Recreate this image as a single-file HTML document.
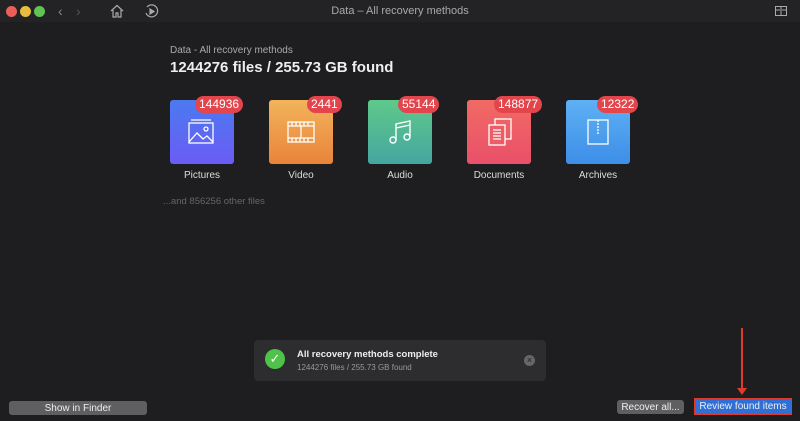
<!DOCTYPE html><html><head><style>
body{margin:0;width:800px;height:421px;background:#1e1e20;font-family:"Liberation Sans",sans-serif;position:relative;overflow:hidden;color:#ddd}
.tb{position:absolute;left:0;top:0;width:800px;height:22px;background:#232225}
.d{position:absolute;top:6px;width:11px;height:11px;border-radius:50%}
.t{position:absolute;width:64px;height:64px;top:100px;border-radius:3px}
.b{position:absolute;top:96px;height:17px;padding:0 4px;background:#e2464c;border-radius:9px;color:#fff;font-size:12px;line-height:17px}
.l{position:absolute;top:170px;width:100px;text-align:center;font-size:10px;color:#ddd}
.btn{position:absolute;height:14px;background:#5f5f62;border-radius:3px;font-size:10px;line-height:15px;text-align:center;color:#eee}
</style></head><body>
<div class="tb"></div>
<div class="d" style="left:6px;background:#ec5f59"></div>
<div class="d" style="left:20px;background:#e6be3b"></div>
<div class="d" style="left:34px;background:#5fc451"></div>
<div style="position:absolute;left:58px;top:3px;color:#888;font-size:14px">‹</div>
<div style="position:absolute;left:76px;top:3px;color:#555;font-size:14px">›</div>
<svg style="position:absolute;left:110px;top:4px" width="14" height="14" viewBox="0 0 14 14" fill="none" stroke="#aaa" stroke-width="1.2"><path d="M1 7L7 1.5 13 7M3 6v7h3v-4h2v4h3V6"/></svg>
<svg style="position:absolute;left:144px;top:4px" width="15" height="15" viewBox="0 0 15 15" fill="none" stroke="#aaa" stroke-width="1.2"><path d="M3 3A6 6 0 1 1 2 9"/><path d="M6 5l4 2.5-4 2.5z" fill="#aaa"/></svg>
<div style="position:absolute;left:0;width:800px;top:5px;text-align:center;font-size:11px;color:#aaa">Data – All recovery methods</div>
<svg style="position:absolute;left:775px;top:6px" width="12" height="10" fill="none" stroke="#aaa"><rect x="0.5" y="0.5" width="11" height="9"/><path d="M6 0v10M1 4h4M7 4h4"/></svg>
<div style="position:absolute;left:170px;top:45px;font-size:10px;color:#aaa">Data - All recovery methods</div>
<div style="position:absolute;left:170px;top:59px;font-size:15px;font-weight:bold;color:#eee">1244276 files / 255.73 GB found</div>

<div class="t" style="left:170px;background:linear-gradient(#4b7af0,#6a5cf5)"></div>
<svg style="position:absolute;left:187px;top:118px" width="30" height="28" fill="none" stroke="#fff" stroke-width="1.3"><rect x="2" y="5" width="24" height="20"/><path d="M4 2h20M2 24l8-9 6 6 4-3 6 6"/><circle cx="19" cy="11" r="2"/></svg>
<div class="b" style="left:195px">144936</div><div class="l" style="left:152px">Pictures</div>

<div class="t" style="left:269px;background:linear-gradient(#f2b35b,#e9843a)"></div>
<svg style="position:absolute;left:287px;top:120px" width="28" height="24" fill="none" stroke="#fff" stroke-width="1.3"><rect x="1" y="2" width="26" height="20"/><path d="M1 6h26M1 18h26M14 6v12M5 2v4M9 2v4M13 2v4M17 2v4M21 2v4M5 18v4M9 18v4M13 18v4M17 18v4M21 18v4"/></svg>
<div class="b" style="left:307px">2441</div><div class="l" style="left:251px">Video</div>

<div class="t" style="left:368px;background:linear-gradient(#5ec98a,#45a6a0)"></div>
<svg style="position:absolute;left:388px;top:118px" width="26" height="28" fill="none" stroke="#fff" stroke-width="1.4"><circle cx="5" cy="22" r="3"/><circle cx="19" cy="19" r="3"/><path d="M8 22V6l14-3v16M8 10l14-3"/></svg>
<div class="b" style="left:398px">55144</div><div class="l" style="left:350px">Audio</div>

<div class="t" style="left:467px;background:linear-gradient(#f16a63,#e9506a)"></div>
<svg style="position:absolute;left:485px;top:117px" width="30" height="30" fill="none" stroke="#fff" stroke-width="1.3"><rect x="10" y="2" width="16" height="20"/><rect x="4" y="8" width="16" height="20" fill="#ec5d66"/><path d="M8 13h8M8 16h8M8 19h8M8 22h8"/></svg>
<div class="b" style="left:494px">148877</div><div class="l" style="left:449px">Documents</div>

<div class="t" style="left:566px;background:linear-gradient(#5fb0f4,#3d8ee8)"></div>
<svg style="position:absolute;left:586px;top:118px" width="24" height="28" fill="none" stroke="#fff" stroke-width="1.3"><rect x="2" y="2" width="20" height="24"/><path d="M12 2v14" stroke-dasharray="2 1"/></svg>
<div class="b" style="left:597px">12322</div><div class="l" style="left:548px">Archives</div>

<div style="position:absolute;left:163px;top:196px;font-size:9.5px;color:#666">...and 856256 other files</div>

<div style="position:absolute;left:254px;top:340px;width:292px;height:41px;background:#2d2d30;border-radius:4px"></div>
<div style="position:absolute;left:265px;top:349px;width:20px;height:20px;border-radius:50%;background:#4fc24a;color:#fff;text-align:center;font-size:13px;line-height:20px">✓</div>
<div style="position:absolute;left:297px;top:349px;font-size:9.5px;font-weight:bold;color:#eee">All recovery methods complete</div>
<div style="position:absolute;left:297px;top:363px;font-size:8px;color:#999">1244276 files / 255.73 GB found</div>
<div style="position:absolute;left:524px;top:355px;width:11px;height:11px;border-radius:50%;background:#666;color:#222;font-size:9px;text-align:center;line-height:11px">×</div>

<div style="position:absolute;left:741px;top:328px;width:2px;height:62px;background:#e03a2a"></div>
<div style="position:absolute;left:737px;top:388px;width:0;height:0;border-left:5px solid transparent;border-right:5px solid transparent;border-top:7px solid #e03a2a"></div>

<div class="btn" style="left:9px;top:401px;width:138px">Show in Finder</div>
<div class="btn" style="left:617px;top:400px;width:67px">Recover all...</div>
<div style="position:absolute;left:694px;top:398px;width:96px;height:15px;background:#2f6fd6;border:1px solid #e03a2a;font-size:10px;line-height:16px;text-align:center;color:#eee">Review found items</div>
</body></html>
